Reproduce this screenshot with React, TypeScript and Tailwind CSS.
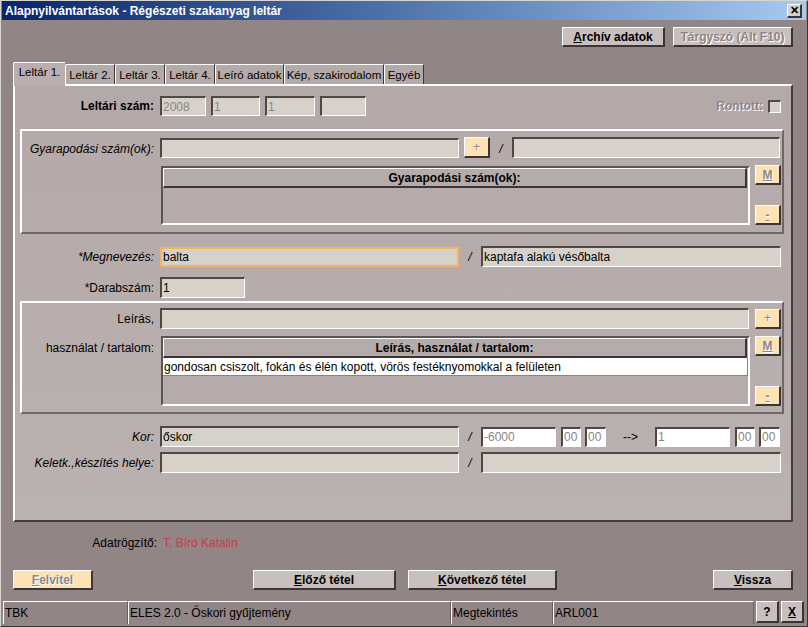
import React from 'react';

const sunken =
  'border-t-2 border-l-2 border-r border-b border-t-[#4e4747] border-l-[#4e4747] border-r-white border-b-white';
const raised =
  'border-t border-l border-r-2 border-b-2 border-t-white border-l-white border-r-[#3c3535] border-b-[#3c3535]';
const disabledText = 'text-[#8e8686] [text-shadow:1px_1px_0_#ffffff]';

function Edit({ w, h = 'h-[20px]', value = '', white = false, gray = false, extra = '' }: { w: string; h?: string; value?: string; white?: boolean; gray?: boolean; extra?: string }) {
  return (
    <div
      className={`${w} ${h} ${white ? 'bg-white' : 'bg-[#d6d2ca]'} ${gray ? 'text-[#8a8585]' : 'text-black'} ${extra || sunken} flex items-center pl-[1px] text-[12px] whitespace-nowrap overflow-hidden shrink-0`}
    >
      {value}
    </div>
  );
}

function Btn({ w, h = 'h-[20px]', peach = false, disabled = false, bold = true, children }: { w: string; h?: string; peach?: boolean; disabled?: boolean; bold?: boolean; children: React.ReactNode }) {
  return (
    <div
      className={`${w} ${h} ${peach ? 'bg-[#fde2b6]' : 'bg-[#c8bfbf]'} ${raised} ${disabled ? disabledText : 'text-black'} ${bold ? 'font-bold' : ''} flex items-center justify-center text-[12px] whitespace-nowrap shrink-0`}
    >
      {children}
    </div>
  );
}

function Tab({ w, label, active = false }: { w: string; label: string; active?: boolean }) {
  return (
    <div
      className={`${w} ${active ? 'h-[24px] -mb-[2px] z-10 relative bg-[#b9afaf] pb-[4px]' : 'h-[20px] bg-[#b4aaaa] border-r-[#3c3535] border-r pt-[2px]'} border-t border-l border-t-white border-l-white flex items-center justify-center text-[11.5px] text-black shrink-0 whitespace-nowrap rounded-tl-[2px]`}
    >
      {label}
    </div>
  );
}

function Label({ w, children, italic = false, bold = false }: { w: string; children: React.ReactNode; italic?: boolean; bold?: boolean }) {
  return (
    <div className={`${w} text-right text-[12px] text-black shrink-0 whitespace-nowrap ${italic ? 'italic' : ''} ${bold ? 'font-bold' : ''}`}>
      {children}
    </div>
  );
}

function Slash() {
  return <div className="w-[22px] text-center text-[12px] italic text-black shrink-0">/</div>;
}

function Grid({ h, title, rows }: { h: string; title: string; rows: string[] }) {
  return (
    <div className={`w-[589px] ${h} border-2 border-t-[#5c5454] border-l-[#5c5454] border-r-white border-b-white bg-[#b6abab] flex flex-col shrink-0`}>
      <div className={`w-[584px] h-[20px] ${raised} bg-[#b6abab] flex items-center justify-center font-bold text-[12px] text-black`}>
        {title}
      </div>
      {rows.map((r) => (
        <div key={r} className="w-[585px] h-[18px] bg-white border-r border-b border-r-[#8a8282] border-b-[#8a8282] flex items-center pl-[1px] text-[12px] text-black whitespace-nowrap">
          {r}
        </div>
      ))}
    </div>
  );
}

export default function App() {
  return (
    <div className="w-[808px] h-[627px] overflow-hidden bg-[#918585] border border-t-[#d8d4d0] border-l-[#d8d4d0] border-r-[#3c3535] border-b-[#3c3535] flex flex-col font-['Liberation_Sans',Arial,sans-serif]">
      {/* title bar */}
      <div className="h-[19px] mx-[1px] bg-gradient-to-r from-[#0a246a] to-[#a6caf0] flex items-center pl-[3px] pr-[4px] shrink-0">
        <div className="text-white font-bold text-[12px] whitespace-nowrap">Alapnyilvántartások - Régészeti szakanyag leltár</div>
        <div className="flex-1" />
        <div className={`w-[15px] h-[14px] bg-[#d4d0c8] ${raised} flex items-center justify-center text-[11px] font-bold text-black leading-none`}>✕</div>
      </div>

      {/* top buttons */}
      <div className="flex justify-end gap-[8px] mt-[7px] pr-[14px] shrink-0">
        <Btn w="w-[103px]"><span><u>A</u>rchív adatok</span></Btn>
        <Btn w="w-[120px]" disabled><span>Tár<u>g</u>yszó (Alt F10)</span></Btn>
      </div>

      {/* tabs */}
      <div className="flex items-end h-[22px] mt-[15px] pl-[12px] shrink-0">
        <Tab w="w-[52px]" label="Leltár 1." active />
        <Tab w="w-[50px]" label="Leltár 2." />
        <Tab w="w-[50px]" label="Leltár 3." />
        <Tab w="w-[50px]" label="Leltár 4." />
        <Tab w="w-[69px]" label="Leíró adatok" />
        <Tab w="w-[100px]" label="Kép, szakirodalom" />
        <Tab w="w-[40px]" label="Egyéb" />
      </div>

      {/* tab panel */}
      <div className="ml-[12px] w-[780px] h-[438px] shrink-0 border-2 border-t-white border-l-white border-r-[#453d3d] border-b-[#453d3d] bg-gradient-to-b from-[#b4a9a9] to-[#bab1b1] flex flex-col">
        {/* Leltári szám */}
        <div className="flex items-center mt-[10px]">
          <Label w="w-[139px]" bold>Leltári szám:</Label>
          <div className="ml-[6px] flex gap-[5px]">
            <Edit w="w-[46px]" value="2008" gray />
            <Edit w="w-[49px]" value="1" gray />
            <Edit w="w-[50px]" value="1" gray />
            <Edit w="w-[46px]" />
          </div>
          <div className="flex-1" />
          <div className={`text-[12px] font-bold ${disabledText}`}>Rontott:</div>
          <div className={`ml-[5px] mr-[10px] w-[13px] h-[13px] bg-[#d4d0c8] ${sunken}`} />
        </div>

        {/* Gyarapodási group */}
        <div className="ml-[5px] mt-[13px] w-[764px] h-[105px] border-2 border-t-white border-l-white border-r-[#706666] border-b-[#706666] flex flex-col">
          <div className="flex items-start mt-[6px]">
            <Label w="w-[132px] mt-[3px] text-[12.5px]" italic>Gyarapodási szám(ok):</Label>
            <div className="ml-[6px] mt-[1px]"><Edit w="w-[299px]" /></div>
            <div className="ml-[5px]"><Btn w="w-[26px]" h="h-[21px]" peach disabled bold={false}>+</Btn></div>
            <div className="mt-[3px]"><Slash /></div>
            <Edit w="w-[268px]" h="h-[21px]" />
          </div>
          <div className="flex mt-[8px] ml-[139px]">
            <Grid h="h-[59px]" title="Gyarapodási szám(ok):" rows={[]} />
            <div className="ml-[5px] -mt-[1px] flex flex-col justify-between h-[60px]">
              <Btn w="w-[26px]" peach disabled><u>M</u></Btn>
              <Btn w="w-[26px]" peach disabled><u>-</u></Btn>
            </div>
          </div>
        </div>

        {/* Megnevezés */}
        <div className="flex items-center mt-[12px]">
          <Label w="w-[139px]" italic>*Megnevezés:</Label>
          <div className="ml-[6px]">
            <Edit w="w-[299px]" value="balta" extra="border-2 border-[#f2b463]" />
          </div>
          <Slash />
          <Edit w="w-[300px]" h="h-[21px]" value="kaptafa alakú vésőbalta" />
        </div>

        {/* Darabszám */}
        <div className="flex items-center mt-[10px]">
          <Label w="w-[139px]">*Darabszám:</Label>
          <div className="ml-[6px]"><Edit w="w-[85px]" h="h-[21px]" value="1" /></div>
        </div>

        {/* Leírás group */}
        <div className="ml-[5px] mt-[3px] w-[764px] h-[113px] border-2 border-t-white border-l-white border-r-[#706666] border-b-[#706666] flex flex-col">
          <div className="flex items-center mt-[5px]">
            <Label w="w-[132px]">Leírás,</Label>
            <div className="ml-[6px]"><Edit w="w-[589px]" h="h-[21px]" /></div>
            <div className="ml-[6px]"><Btn w="w-[26px]" peach disabled bold={false}>+</Btn></div>
          </div>
          <div className="flex items-start mt-[7px]">
            <Label w="w-[132px] mt-[3px]">használat / tartalom:</Label>
            <div className="ml-[7px]">
              <Grid h="h-[70px]" title="Leírás, használat / tartalom:" rows={['gondosan csiszolt, fokán és élén kopott, vörös festéknyomokkal a felületen']} />
            </div>
            <div className="ml-[5px] flex flex-col justify-between h-[70px]">
              <Btn w="w-[26px]" peach disabled><u>M</u></Btn>
              <Btn w="w-[26px]" peach disabled><u>-</u></Btn>
            </div>
          </div>
        </div>

        {/* Kor */}
        <div className="flex items-center mt-[12px]">
          <Label w="w-[139px]" italic>Kor:</Label>
          <div className="ml-[6px]"><Edit w="w-[299px]" h="h-[21px]" value="őskor" /></div>
          <Slash />
          <Edit w="w-[75px]" value="-6000" white gray />
          <div className="ml-[5px]"><Edit w="w-[20px]" value="00" white gray /></div>
          <div className="ml-[4px]"><Edit w="w-[21px]" value="00" white gray /></div>
          <div className="w-[49px] text-center text-[12px] text-black shrink-0">--&gt;</div>
          <Edit w="w-[75px]" value="1" white gray />
          <div className="ml-[5px]"><Edit w="w-[20px]" value="00" white gray /></div>
          <div className="ml-[4px]"><Edit w="w-[21px]" value="00" white gray /></div>
        </div>

        {/* Keletk */}
        <div className="flex items-center mt-[5px]">
          <Label w="w-[139px]" italic>Keletk.,készítés helye:</Label>
          <div className="ml-[6px]"><Edit w="w-[299px]" h="h-[21px]" /></div>
          <Slash />
          <Edit w="w-[300px]" h="h-[21px]" />
        </div>
      </div>

      {/* Adatrögzítő */}
      <div className="flex items-center h-[14px] mt-[14px] text-[12px] shrink-0">
        <div className="w-[156px] text-right text-black">Adatrögzítő:</div>
        <div className="ml-[6px] text-[#c2404f]">T. Bíró Katalin</div>
      </div>

      {/* buttons */}
      <div className="flex mt-[20px] pl-[12px] shrink-0">
        <Btn w="w-[80px]" peach disabled><span><u>F</u>elvitel</span></Btn>
        <div className="ml-[160px]"><Btn w="w-[143px]"><span><u>E</u>lőző tétel</span></Btn></div>
        <div className="ml-[12px]"><Btn w="w-[149px]"><span><u>K</u>övetkező tétel</span></Btn></div>
        <div className="ml-[156px]"><Btn w="w-[80px]"><span><u>V</u>issza</span></Btn></div>
      </div>

      {/* status bar */}
      <div className="flex mt-[9px] h-[27px] pl-[2px] pt-[2px] shrink-0 text-[12px] text-black">
        <div className="w-[125px] h-[23px] border-t border-l border-r border-t-white border-l-white border-r-[#6a6060] flex items-center pl-[1px]">TBK</div>
        <div className="w-[323px] h-[23px] border-t border-l border-r border-t-white border-l-white border-r-[#6a6060] flex items-center pl-[1px]">ELES 2.0 - Őskori gyűjtemény</div>
        <div className="w-[102px] h-[23px] border-t border-l border-r border-t-white border-l-white border-r-[#6a6060] flex items-center pl-[1px]">Megtekintés</div>
        <div className="w-[201px] h-[23px] border-t border-l border-r border-t-white border-l-white border-r-[#6a6060] flex items-center pl-[1px]">ARL001</div>
        <div className="ml-[2px]"><Btn w="w-[23px]" h="h-[22px]">?</Btn></div>
        <div className="ml-[2px]"><Btn w="w-[23px]" h="h-[22px]"><u>X</u></Btn></div>
      </div>
    </div>
  );
}
